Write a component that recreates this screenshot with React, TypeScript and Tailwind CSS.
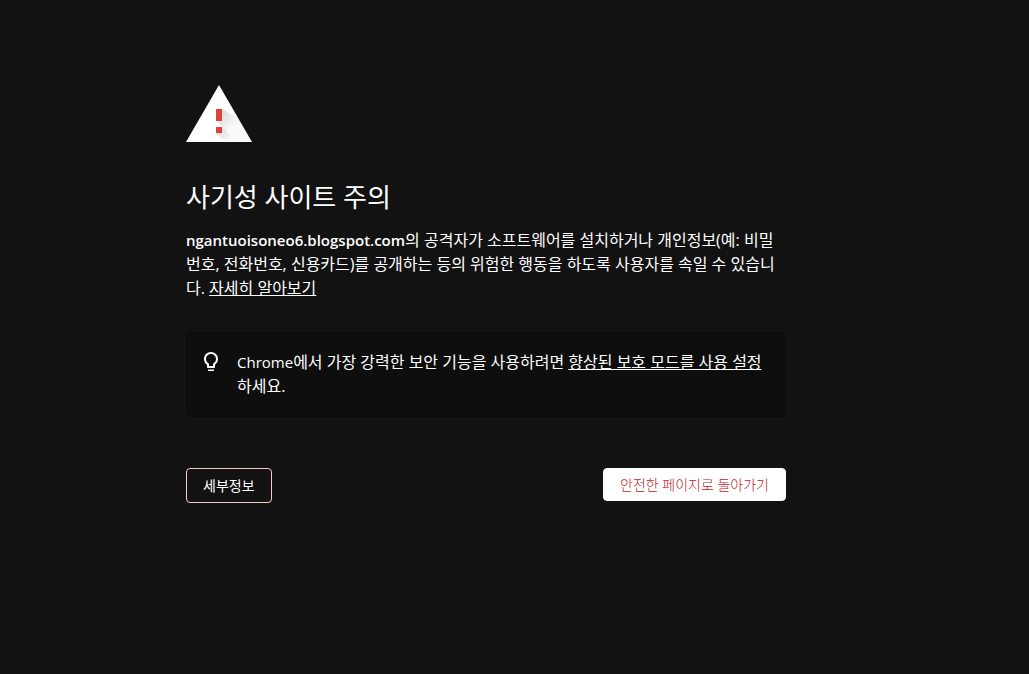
import { type ReactNode } from "react";

const WarningIcon = () => (
  <svg width="66" height="57" viewBox="0 0 66 57" aria-hidden="true">
    <defs>
      <linearGradient id="shade" x1="32" y1="26" x2="52" y2="46" gradientUnits="userSpaceOnUse">
        <stop offset="0" stopColor="#000" stopOpacity="0.16" />
        <stop offset="0.8" stopColor="#000" stopOpacity="0.02" />
      </linearGradient>
      <linearGradient id="shadeDot" x1="30" y1="45" x2="42" y2="57" gradientUnits="userSpaceOnUse">
        <stop offset="0" stopColor="#000" stopOpacity="0.16" />
        <stop offset="1" stopColor="#000" stopOpacity="0.02" />
      </linearGradient>
    </defs>
    <path d="M33 0L66 57H0z" fill="#fff" />
    <path d="M36 24L52.5 33.7 66 57H51L30 36z" fill="url(#shade)" />
    <path d="M36 42L51 57H39L30 48z" fill="url(#shadeDot)" />
    <path d="M30 24h6v12h-6zM30 42h6v6h-6z" fill="#db4437" />
  </svg>
);

const BulbIcon = () => (
  <svg className="size-6 shrink-0" viewBox="0 0 24 24" fill="#fff" aria-hidden="true">
    <path d="M9 19.5h6V21H9zM12 2C8.1 2 5 5.1 5 9c0 2.4 1.2 4.5 3 5.7V17c0 .5.4 1 1 1h6c.6 0 1-.5 1-1v-2.3c1.8-1.3 3-3.4 3-5.7 0-3.9-3.1-7-7-7zm2.9 11.1l-.9.6V16h-4v-2.3l-.9-.6C7.8 12.2 7 10.6 7 9c0-2.8 2.2-5 5-5s5 2.2 5 5c0 1.6-.8 3.2-2.1 4.1z" />
  </svg>
);

const TextLink = ({ children }: { children: ReactNode }) => (
  <a href="#" className="underline">
    {children}
  </a>
);

const App = () => {
  return (
    <div className="min-h-screen bg-[#121212] pr-[57px] font-['Open_Sans','Noto_Sans_CJK_KR',sans-serif] text-base leading-6 text-white">
      <main className="mx-auto max-w-[600px] pt-[85px]">
        <WarningIcon />
        <h1 className="mt-9 text-[26px] leading-[38px]">사기성 사이트 주의</h1>
        <p className="mt-3">
          <strong className="text-[15px] font-semibold">ngantuoisoneo6.blogspot.com</strong>의
          공격자가 소프트웨어를 설치하거나 개인정보(예: 비밀번호, 전화번호, 신용카드)를 공개하는
          등의 위험한 행동을 하도록 사용자를 속일 수 있습니다.{" "}
          <TextLink>자세히 알아보기</TextLink>
        </p>
        <div className="mt-8 flex gap-[14px] rounded border border-[#0b0b0b] bg-[#0e0e0e] px-3 pt-[17px] pb-[18px]">
          <BulbIcon />
          <p>
            <span className="text-[15px]">Chrome</span>에서 가장 강력한 보안 기능을 사용하려면{" "}
            <TextLink>향상된 보호 모드를 사용 설정</TextLink>하세요.
          </p>
        </div>
        <div className="mt-[51px] flex items-start justify-between text-sm">
          <button className="h-[35px] rounded border border-[#f6cbc6] px-4">세부정보</button>
          <button className="h-[33px] rounded border border-white bg-white px-4 font-light text-[#c5221f]">
            안전한 페이지로 돌아가기
          </button>
        </div>
      </main>
    </div>
  );
};

export default App;
